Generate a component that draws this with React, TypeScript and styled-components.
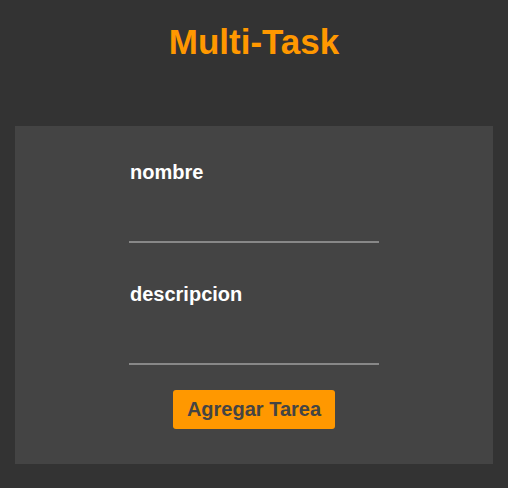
import React from "react";
import styled, { createGlobalStyle } from "styled-components";

const Global = createGlobalStyle`
  html, body { margin: 0; padding: 0; background: #333333; }
  body { font-family: "Liberation Sans", Arial, sans-serif; }
  * { box-sizing: border-box; }
`;

const Page = styled.div`
  padding: 21px 15px 24px;
`;

const Title = styled.h1`
  margin: 0 0 64px;
  text-align: center;
  color: #ff9800;
  font-size: 35px;
  font-weight: bold;
  line-height: 41px;
`;

const Panel = styled.form`
  background: #444444;
  padding: 35px;
  display: flex;
  flex-direction: column;
  align-items: center;
`;

const Field = styled.div`
  width: 250px;
  display: flex;
  flex-direction: column;
  margin-bottom: ${(p: { $gap: number }) => p.$gap}px;
`;

const Label = styled.label`
  color: #ffffff;
  font-size: 20px;
  font-weight: bold;
  line-height: 23px;
  padding-left: 1px;
`;

const Input = styled.input`
  margin-top: 10px;
  height: 49px;
  width: 100%;
  background: transparent;
  border: none;
  border-bottom: 2px solid #888888;
  color: #ffffff;
  font-family: inherit;
  font-size: 18px;
  outline: none;
`;

const Button = styled.button`
  background: #ff9800;
  color: #444444;
  border: none;
  border-radius: 3px;
  padding: 8px 14px;
  font-family: inherit;
  font-size: 20px;
  font-weight: bold;
  line-height: 23px;
  cursor: pointer;
`;

export default function App() {
  return (
    <>
      <Global />
      <Page>
        <Title>Multi-Task</Title>
        <Panel onSubmit={(e) => e.preventDefault()}>
          <Field $gap={40}>
            <Label htmlFor="nombre">nombre</Label>
            <Input id="nombre" type="text" />
          </Field>
          <Field $gap={25}>
            <Label htmlFor="descripcion">descripcion</Label>
            <Input id="descripcion" type="text" />
          </Field>
          <Button type="submit">Agregar Tarea</Button>
        </Panel>
      </Page>
    </>
  );
}
